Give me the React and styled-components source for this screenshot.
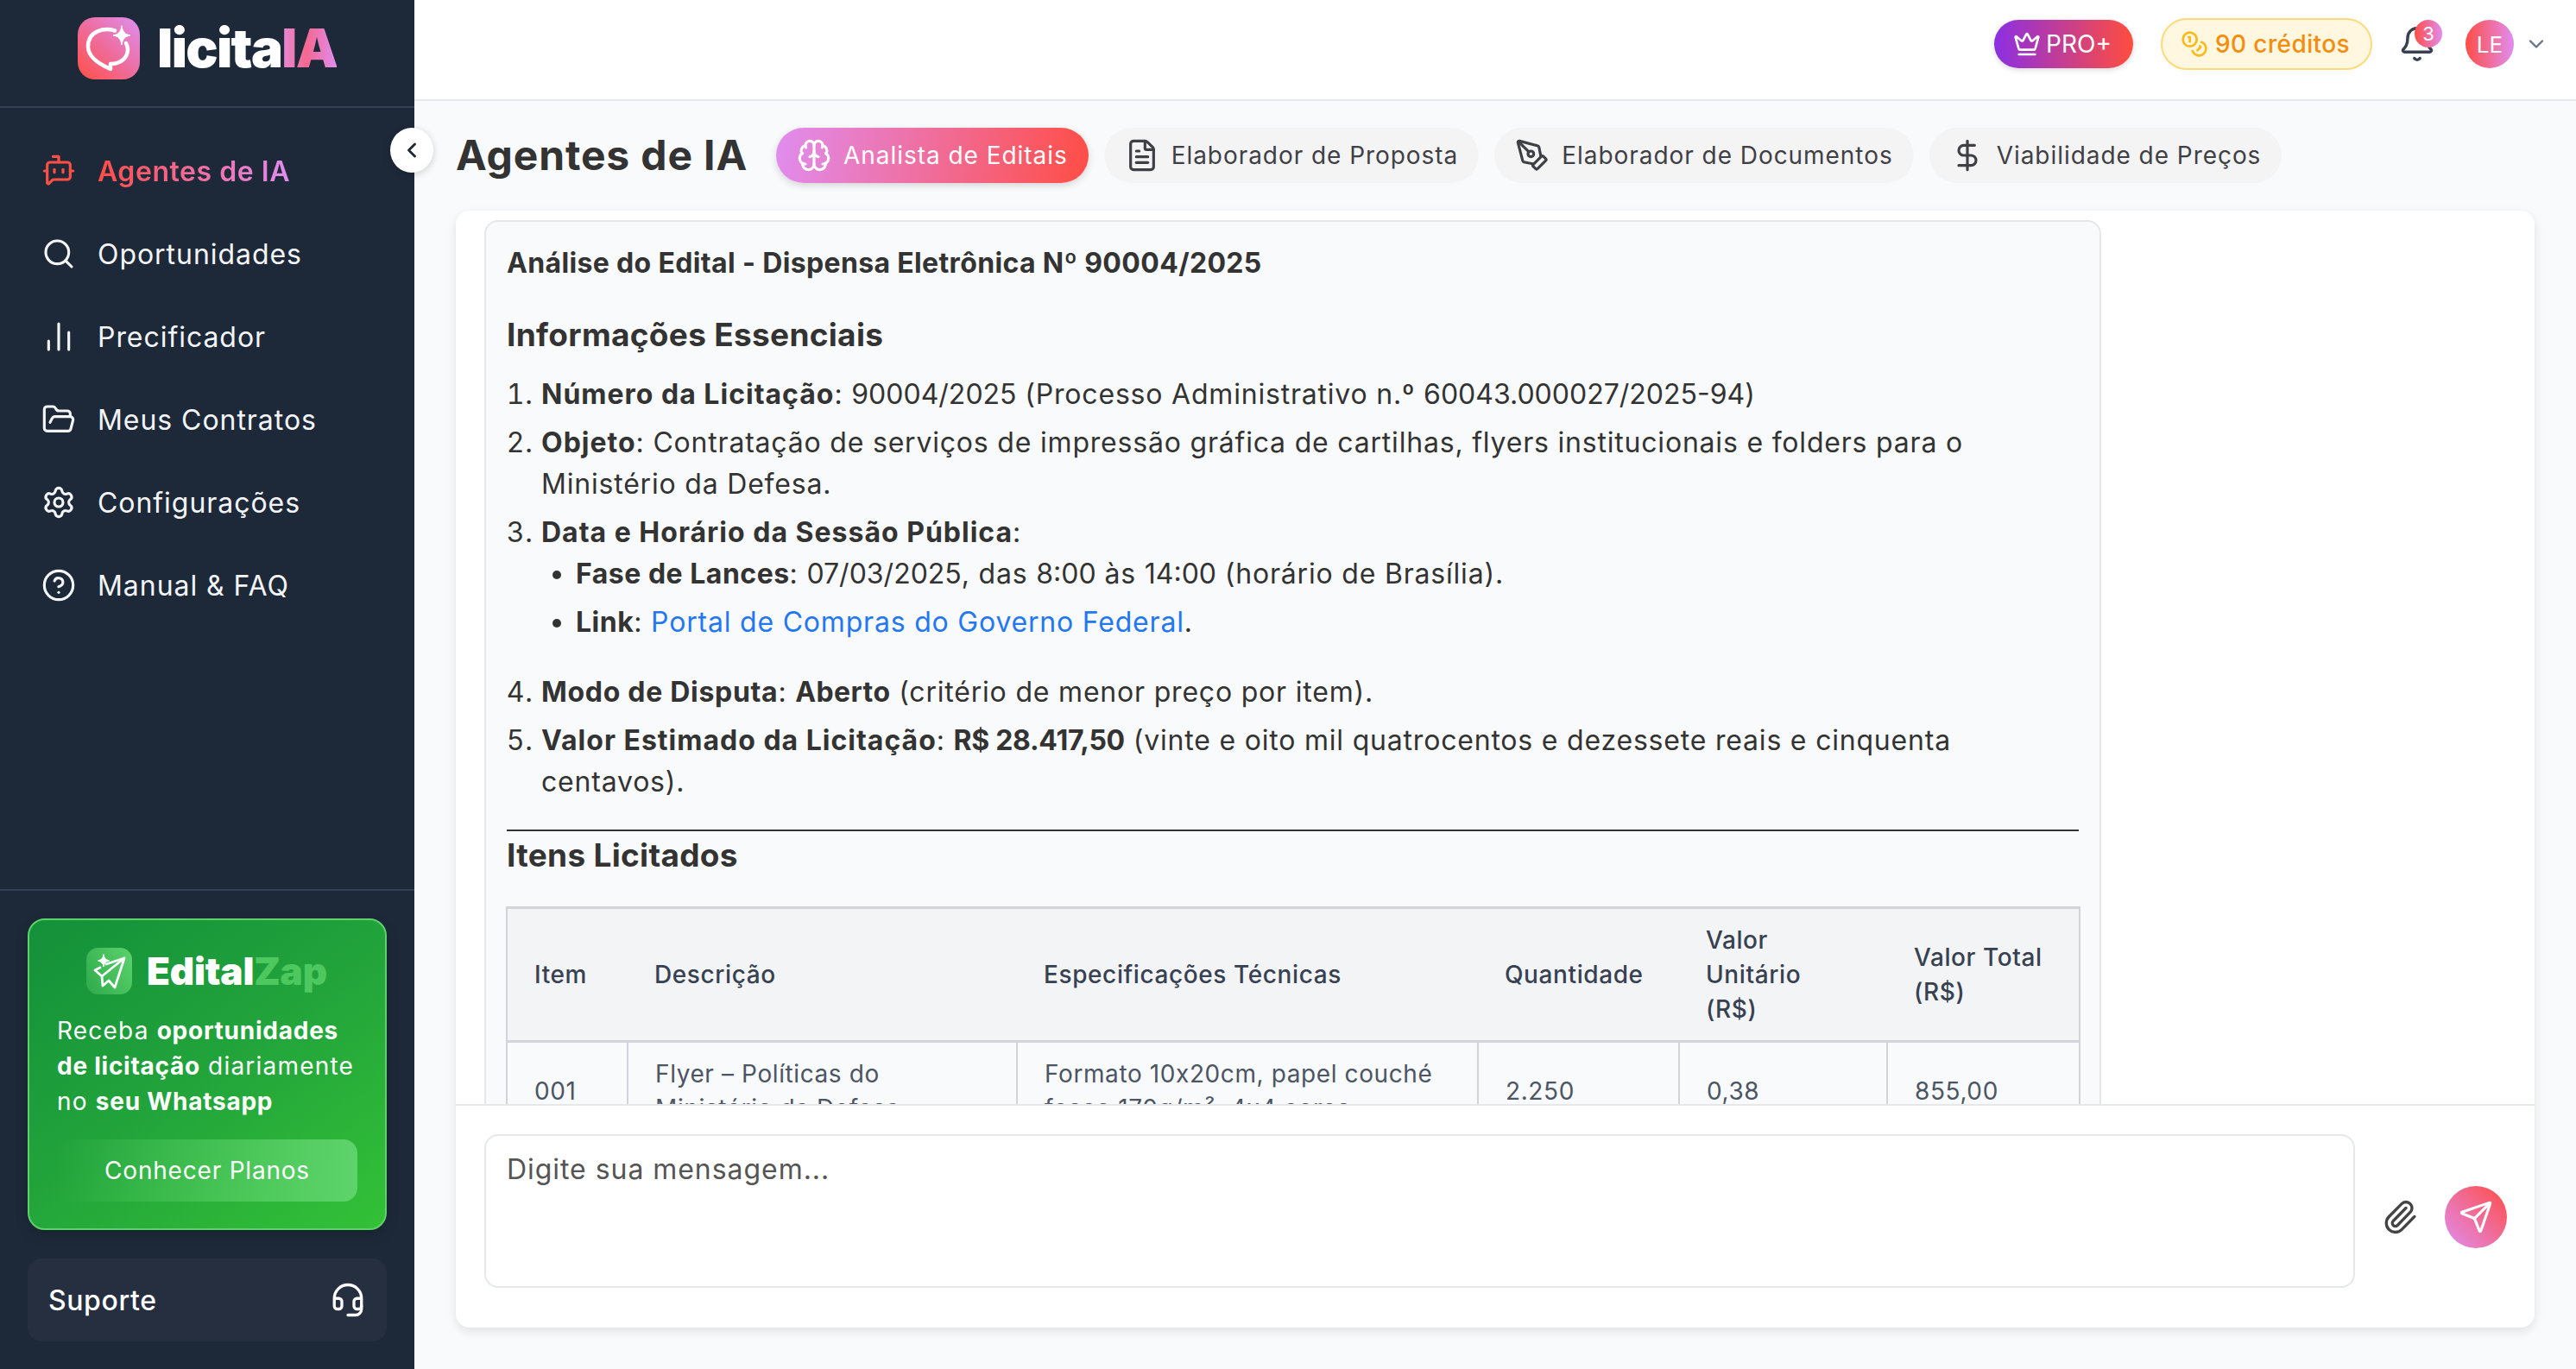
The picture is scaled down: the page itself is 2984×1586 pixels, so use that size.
import React from "react";
import styled, { createGlobalStyle } from "styled-components";
import {
  BotMessageSquare, Search, ChartNoAxesColumn, FolderOpen, Settings, CircleHelp, Headset,
  ChevronLeft, ChevronDown, Brain, FileText, PenTool, DollarSign, Crown, Coins, Bell, Paperclip, Send,
} from "lucide-react";

const Global = createGlobalStyle`
  html, body { margin: 0; padding: 0; }
  body { font-family: Inter, "Noto Sans", "Liberation Sans", sans-serif; color: #333; background: #f9fafb; }
  * { box-sizing: border-box; }
`;

const Shell = styled.div`
  display: flex;
  width: 2984px;
  height: 1586px;
  overflow: hidden;
`;

const Sidebar = styled.aside`
  position: relative;
  flex: 0 0 480px;
  display: flex;
  flex-direction: column;
  background: #1d2939;
`;

const LogoRow = styled.div`
  flex: 0 0 125px;
  display: flex;
  align-items: flex-start;
  gap: 20px;
  padding: 20px 0 0 90px;
  border-bottom: 2px solid #344054;
`;

const LogoMark = styled.div`
  width: 72px;
  height: 72px;
  border-radius: 20px;
  background: linear-gradient(45deg, #ff4f45 0%, #ee6d9f 50%, #dd90f0 100%);
`;

const Wordmark = styled.div`
  font-size: 62px;
  line-height: 72px;
  font-weight: 900;
  letter-spacing: -1.7px;
  color: #fff;
  & > span {
    background: linear-gradient(90deg, #e58ada, #f4688f 45%, #e08df0);
    -webkit-background-clip: text;
    background-clip: text;
    color: transparent;
  }
`;

const CollapseButton = styled.button`
  position: absolute;
  left: 452px;
  top: 148px;
  width: 50px;
  height: 52px;
  border: 0;
  border-radius: 50%;
  background: #fff;
  color: #1f2937;
  display: flex;
  align-items: center;
  justify-content: center;
  padding: 0;
  box-shadow: 0 2px 8px rgba(0, 0, 0, .18);
`;

const Nav = styled.nav`
  flex: 1;
  display: flex;
  flex-direction: column;
  padding-top: 25px;
`;

const NavItem = styled.div`
  height: 96px;
  display: flex;
  align-items: center;
  gap: 25px;
  padding-left: 48px;
  font-size: 32px;
  letter-spacing: ${(p) => (p.$active ? "0.55px" : "0.95px")};
  color: ${(p) => (p.$active ? "#ff5045" : "#f3f4f6")};
  font-weight: ${(p) => (p.$active ? 600 : 400)};
`;

const GradientLabel = styled.span`
  background: linear-gradient(90deg, #ff4d45, #e08df0);
  -webkit-background-clip: text;
  background-clip: text;
  color: transparent;
`;

const SideFooter = styled.div`
  display: flex;
  flex-direction: column;
  gap: 33px;
  padding: 32px;
  border-top: 2px solid #344054;
`;

const PromoCard = styled.div`
  height: 361px;
  border: 2px solid #5fd16a;
  border-radius: 20px;
  padding: 32px 32px 0;
  background: linear-gradient(145deg, #14903a 0%, #22a43b 50%, #33c137 100%);
  color: #fff;
  box-shadow: 0 6px 16px rgba(0, 0, 0, .12);
`;

const PromoBrand = styled.div`
  display: flex;
  align-items: center;
  gap: 17px;
  padding-left: 34px;
`;

const PromoMark = styled.div`
  width: 53px;
  height: 54px;
  border-radius: 14px;
  background: linear-gradient(60deg, #2fa94a, #5cd36c);
`;

const PromoName = styled.div`
  font-size: 44px;
  line-height: 54px;
  font-weight: 900;
  letter-spacing: -0.2px;
  & > span { color: #4cc85f; }
`;

const PromoText = styled.p`
  margin: 22px 0 0;
  font-size: 28px;
  line-height: 41px;
  letter-spacing: 1.2px;
  white-space: nowrap;
  & > b { font-weight: 700; letter-spacing: 0.75px; }
`;

const PromoButton = styled.div`
  height: 72px;
  margin-top: 23px;
  border-radius: 16px;
  display: flex;
  align-items: center;
  justify-content: center;
  font-size: 28px;
  letter-spacing: 0.8px;
  background: linear-gradient(90deg, rgba(94, 211, 107, 0) 0%, #5ed36b 100%);
`;

const SupportBox = styled.div`
  height: 96px;
  border-radius: 16px;
  background: #252f3f;
  display: flex;
  align-items: center;
  justify-content: space-between;
  padding: 0 24px;
  color: #fff;
  font-size: 32px;
  font-weight: 500;
  letter-spacing: 0.6px;
`;

const Main = styled.main`
  flex: 1;
  min-width: 0;
  display: flex;
  flex-direction: column;
  background: #f9fafb;
`;

const Header = styled.header`
  flex: 0 0 117px;
  display: flex;
  align-items: center;
  justify-content: flex-end;
  padding: 0 32px 13px 0;
  background: #fff;
  border-bottom: 2px solid #e5e7eb;
`;

const ProBadge = styled.div`
  width: 161px;
  height: 56px;
  border-radius: 28px;
  display: flex;
  align-items: center;
  justify-content: center;
  gap: 6px;
  padding-right: 3px;
  color: #fff;
  font-size: 28px;
  background: linear-gradient(90deg, #8b2fe4, #ff4d3e);
  box-shadow: 0 2px 6px rgba(0, 0, 0, .15);
`;

const CreditBadge = styled.div`
  width: 245px;
  height: 60px;
  margin-left: 32px;
  border-radius: 30px;
  display: flex;
  align-items: center;
  justify-content: center;
  gap: 8px;
  padding-right: 3px;
  color: #f58d0c;
  background: #fff7e0;
  border: 2px solid #ffd97a;
  font-size: 28px;
  font-weight: 500;
  letter-spacing: 0.4px;
  & > svg { color: #fabb18; }
`;

const BellWrap = styled.div`
  position: relative;
  display: flex;
  width: 44px;
  height: 44px;
  margin-left: 30px;
  color: #374151;
`;

const BellCount = styled.span`
  position: absolute;
  left: 19px;
  top: -6px;
  width: 32px;
  height: 32px;
  border-radius: 50%;
  display: flex;
  align-items: center;
  justify-content: center;
  color: #fff;
  font-size: 22px;
  background: linear-gradient(90deg, #ff4d45, #e08df0);
`;

const Avatar = styled.div`
  width: 56px;
  height: 56px;
  margin-left: 34px;
  border-radius: 50%;
  display: flex;
  align-items: center;
  justify-content: center;
  color: #fff;
  font-size: 26px;
  background: linear-gradient(90deg, #ff4d45, #e08df0);
`;

const Caret = styled.div`
  display: flex;
  margin-left: 12px;
  color: #64748b;
`;

const Content = styled.div`
  flex: 1;
  min-height: 0;
  display: flex;
  flex-direction: column;
  padding: 31px 48px 48px;
`;

const TitleRow = styled.div`
  flex: 0 0 64px;
  display: flex;
  align-items: center;
  gap: 18px;
`;

const PageTitle = styled.h1`
  margin: 0 15px 2px 0;
  font-size: 48px;
  font-weight: 700;
  letter-spacing: 0.85px;
  color: #333;
  white-space: nowrap;
`;

const Tab = styled.div`
  height: 64px;
  display: flex;
  align-items: center;
  gap: 14px;
  padding: 0 24px;
  border-radius: 32px;
  font-size: 28px;
  letter-spacing: 0.95px;
  white-space: nowrap;
  color: ${(p) => (p.$active ? "#fff" : "#3f3f46")};
  background: ${(p) => (p.$active ? "linear-gradient(100deg, #e08df0, #ff4d45)" : "#f4f4f5")};
  box-shadow: ${(p) => (p.$active ? "0 3px 8px rgba(0,0,0,.15)" : "none")};
`;

const Panel = styled.section`
  flex: 1;
  min-height: 0;
  margin-top: 32px;
  display: flex;
  flex-direction: column;
  border-radius: 16px;
  background: #fff;
  box-shadow: 0 4px 12px rgba(0, 0, 0, .1);
`;

const Messages = styled.div`
  flex: 1;
  min-height: 0;
  overflow: hidden;
  padding: 11px 502px 0 33px;
`;

const Bubble = styled.article`
  border: 2px solid #e5e7eb;
  border-radius: 16px;
  background: #f9fafb;
  padding: 24px 24px 40px;
  color: #333;
  font-size: 32px;
  line-height: 48px;
  letter-spacing: 0.8px;
`;

const Strong = styled.b`
  font-weight: 700;
  letter-spacing: ${(p) => p.$spacing ?? 1}px;
`;

const Digits = styled.span`
  letter-spacing: 0;
`;

const DocTitle = styled.p`
  margin: 0;
  font-weight: 700;
  letter-spacing: 0.35px;
`;

const SectionTitle = styled.h3`
  margin: ${(p) => p.$top}px 0 ${(p) => p.$bottom}px;
  font-size: 37px;
  line-height: 56px;
  font-weight: 700;
  letter-spacing: 0.3px;
`;

const Ordered = styled.ol`
  margin: 0;
  padding: 0 0 0 40px;
`;

const Bullets = styled.ul`
  margin: 0 0 33px;
  padding: 0 0 0 40px;
  list-style: disc;
`;

const Item = styled.li`
  margin-bottom: 8px;
`;

const SiteLink = styled.span`
  color: #2477f2;
`;

const Rule = styled.hr`
  height: 2px;
  margin: 31px 0 0;
  border: 0;
  background: #333;
`;

const SheetTable = styled.table`
  width: 100%;
  margin-left: -1px;
  table-layout: fixed;
  border-collapse: collapse;
  font-size: 28px;
  line-height: 40px;
  letter-spacing: 0.6px;
  color: #374151;
`;

const HeadCell = styled.th`
  padding: 16px 31px;
  background: #f3f4f6;
  border-top: 3px solid #d1d5db;
  border-bottom: 3px solid #d1d5db;
  font-weight: 500;
  text-align: left;
  &:first-child { border-left: 2px solid #d1d5db; }
  &:last-child { border-right: 2px solid #d1d5db; }
`;

const BodyCell = styled.td`
  padding: 16px 31px;
  border: 2px solid #d1d5db;
  color: #4b5563;
`;

const Composer = styled.div`
  flex: 0 0 259px;
  display: flex;
  align-items: center;
  padding: 0 32px 14px 33px;
  border-top: 2px solid #e5e7eb;
`;

const Input = styled.div`
  flex: 1;
  height: 178px;
  padding: 15px 24px;
  border: 2px solid #e5e7eb;
  border-radius: 16px;
  font-size: 32px;
  line-height: 48px;
  letter-spacing: 0.95px;
  color: #555;
`;

const Actions = styled.div`
  display: flex;
  align-items: center;
  gap: 31px;
  margin: 15px 0 0 31px;
`;

const Clip = styled.div`
  display: flex;
  color: #444;
`;

const SendButton = styled.div`
  width: 72px;
  height: 72px;
  border-radius: 50%;
  display: flex;
  align-items: center;
  justify-content: center;
  color: #fff;
  background: linear-gradient(45deg, #e08df0, #ff4d45);
`;

const LogoIcon = () => (
  <svg width="72" height="72" viewBox="0 0 72 72" fill="none" stroke="#fff" strokeWidth="4.5" strokeLinecap="round" strokeLinejoin="round">
    <path d="M43 15.5C31 12 12 15 12 34c0 11 10 19 26 26v-6c12 0 20-7 20-17 0-3-1-5-2-7" />
    <path d="M51 10c1 7 4 10 10 11-6 1-9 4-10 11-1-7-4-10-10-11 6-1 9-4 10-11Z" fill="#fff" strokeWidth="1" />
  </svg>
);

const PlaneIcon = () => (
  <svg width="53" height="54" viewBox="0 0 53 54" fill="none" stroke="#fff" strokeWidth="2.8" strokeLinecap="round" strokeLinejoin="round">
    <path d="M44 12 23 19M44 12 33 46 26 38 19 44 18 33 10 26 16 23M44 12 18 33" />
    <path d="M20 8c.6 4 2.500 6 6.500 7-4 1-6 3-6.500 7-.6-4-2.500-6-6.500-7 4-1 6-3 6.500-7Z" fill="#fff" strokeWidth="1" />
  </svg>
);

const navItems = [
  { label: "Agentes de IA", Icon: BotMessageSquare, active: true },
  { label: "Oportunidades", Icon: Search },
  { label: "Precificador", Icon: ChartNoAxesColumn },
  { label: "Meus Contratos", Icon: FolderOpen },
  { label: "Configurações", Icon: Settings },
  { label: "Manual & FAQ", Icon: CircleHelp },
];

const tabs = [
  { label: "Analista de Editais", Icon: Brain, active: true },
  { label: "Elaborador de Proposta", Icon: FileText },
  { label: "Elaborador de Documentos", Icon: PenTool },
  { label: "Viabilidade de Preços", Icon: DollarSign },
];

const columns = [140, 451, 534, 233, 241, 223];

const rows = [
  ["001", "Flyer – Políticas do Ministério da Defesa", "Formato 10x20cm, papel couché fosco 170g/m², 4x4 cores", "2.250", "0,38", "855,00"],
];

export default function App() {
  return (
    <Shell>
      <Global />
      <Sidebar>
        <LogoRow>
          <LogoMark><LogoIcon /></LogoMark>
          <Wordmark>licita<span>IA</span></Wordmark>
        </LogoRow>
        <CollapseButton aria-label="Recolher"><ChevronLeft size={28} strokeWidth={2.5} /></CollapseButton>
        <Nav>
          {navItems.map(({ label, Icon, active }) => (
            <NavItem key={label} $active={active}>
              <Icon size={40} strokeWidth={1.9} />
              {active ? <GradientLabel>{label}</GradientLabel> : label}
            </NavItem>
          ))}
        </Nav>
        <SideFooter>
          <PromoCard>
            <PromoBrand>
              <PromoMark><PlaneIcon /></PromoMark>
              <PromoName>Edital<span>Zap</span></PromoName>
            </PromoBrand>
            <PromoText>Receba <b>oportunidades</b><br /><b>de licitação</b> diariamente<br />no <b>seu Whatsapp</b></PromoText>
            <PromoButton>Conhecer Planos</PromoButton>
          </PromoCard>
          <SupportBox>Suporte<Headset size={42} strokeWidth={1.9} /></SupportBox>
        </SideFooter>
      </Sidebar>
      <Main>
        <Header>
          <ProBadge><Crown size={32} strokeWidth={2} />PRO+</ProBadge>
          <CreditBadge><Coins size={32} strokeWidth={2} />90 créditos</CreditBadge>
          <BellWrap><Bell size={44} strokeWidth={1.9} /><BellCount>3</BellCount></BellWrap>
          <Avatar>LE</Avatar>
          <Caret><ChevronDown size={28} strokeWidth={2} /></Caret>
        </Header>
        <Content>
          <TitleRow>
            <PageTitle>Agentes de IA</PageTitle>
            {tabs.map(({ label, Icon, active }) => (
              <Tab key={label} $active={active}>
                <Icon size={40} strokeWidth={1.9} />
                {label}
              </Tab>
            ))}
          </TitleRow>
          <Panel>
            <Messages>
              <Bubble>
                <DocTitle>Análise do Edital - Dispensa Eletrônica Nº 90004/2025</DocTitle>
                <SectionTitle $top={31} $bottom={17}>Informações Essenciais</SectionTitle>
                <Ordered>
                  <Item><Strong>Número da Licitação</Strong>: <Digits>90004/2025</Digits> (Processo Administrativo n.º <Digits>60043.000027/2025-94</Digits>)</Item>
                  <Item><Strong>Objeto</Strong>: Contratação de serviços de impressão gráfica de cartilhas, flyers institucionais e folders para o Ministério da Defesa.</Item>
                  <Item>
                    <Strong>Data e Horário da Sessão Pública</Strong>:
                    <Bullets>
                      <Item><Strong $spacing={0.5}>Fase de Lances</Strong>: <Digits>07/03/2025</Digits>, das <Digits>8:00</Digits> às <Digits>14:00</Digits> (horário de Brasília).</Item>
                      <Item><Strong $spacing={0.5}>Link</Strong>: <SiteLink>Portal de Compras do Governo Federal</SiteLink>.</Item>
                    </Bullets>
                  </Item>
                  <Item><Strong $spacing={0.7}>Modo de Disputa</Strong>: <Strong $spacing={0.4}>Aberto</Strong> (critério de menor preço por item).</Item>
                  <Item><Strong>Valor Estimado da Licitação</Strong>: <Strong $spacing={-0.3}>R$ 28.417,50</Strong> (vinte e oito mil quatrocentos e dezessete reais e cinquenta centavos).</Item>
                </Ordered>
                <Rule />
                <SectionTitle $top={0} $bottom={31}>Itens Licitados</SectionTitle>
                <SheetTable>
                  <colgroup>
                    {columns.map((w, i) => <col key={i} width={w} />)}
                  </colgroup>
                  <thead>
                    <tr>
                      <HeadCell>Item</HeadCell>
                      <HeadCell>Descrição</HeadCell>
                      <HeadCell>Especificações Técnicas</HeadCell>
                      <HeadCell>Quantidade</HeadCell>
                      <HeadCell>Valor<br />Unitário<br />(R$)</HeadCell>
                      <HeadCell>Valor Total (R$)</HeadCell>
                    </tr>
                  </thead>
                  <tbody>
                    {rows.map((row) => (
                      <tr key={row[0]}>
                        {row.map((cell, i) => <BodyCell key={i}>{cell}</BodyCell>)}
                      </tr>
                    ))}
                  </tbody>
                </SheetTable>
              </Bubble>
            </Messages>
            <Composer>
              <Input>Digite sua mensagem...</Input>
              <Actions>
                <Clip><Paperclip size={42} strokeWidth={1.9} /></Clip>
                <SendButton><Send size={40} strokeWidth={1.9} /></SendButton>
              </Actions>
            </Composer>
          </Panel>
        </Content>
      </Main>
    </Shell>
  );
}
